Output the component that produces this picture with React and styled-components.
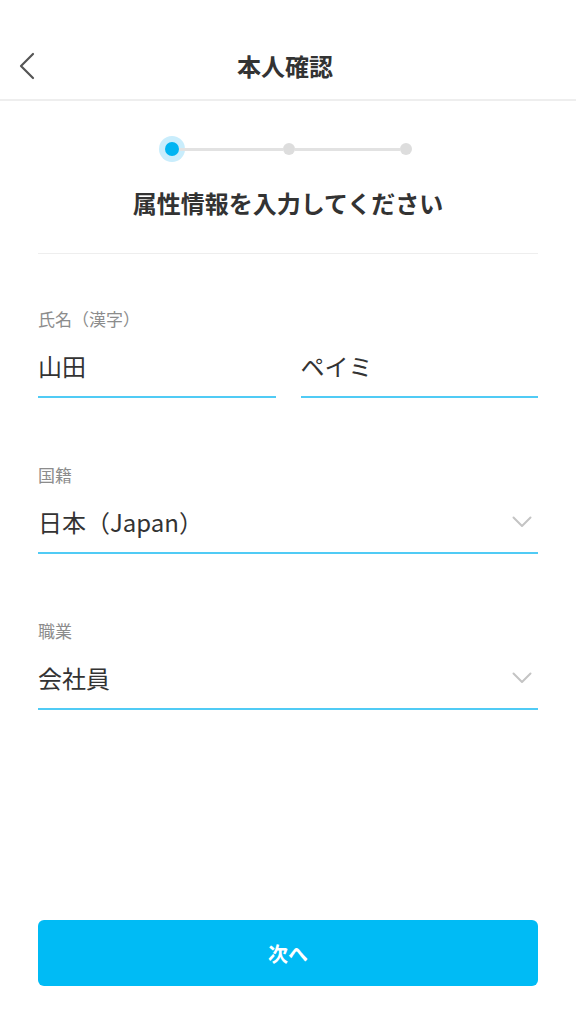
import React from "react";
import styled, { createGlobalStyle } from "styled-components";

const GlobalStyle = createGlobalStyle`
  * {
    box-sizing: border-box;
  }
  body {
    margin: 0;
    background: #fff;
    font-family: "Noto Sans CJK JP", "Noto Sans", sans-serif;
    color: #333;
  }
`;

const Page = styled.div`
  min-height: 1024px;
  display: flex;
  flex-direction: column;
  padding-bottom: 38px;
`;

const Header = styled.header`
  height: 101px;
  padding-top: 33px;
  border-bottom: 2px solid #eeeeee;
`;

const HeaderRow = styled.div`
  height: 66px;
  display: flex;
  align-items: center;
  justify-content: center;
  position: relative;
`;

const BackButton = styled.button`
  position: absolute;
  left: 14px;
  top: 50%;
  transform: translateY(-50%);
  background: none;
  border: none;
  padding: 4px;
  display: flex;
  cursor: pointer;
`;

const HeaderTitle = styled.h1`
  margin: 0 0 0 -6px;
  font-size: 24px;
  font-weight: 700;
  color: #333;
  line-height: 32px;
`;

const Stepper = styled.div`
  margin: 41px auto 0;
  width: 247px;
  height: 14px;
  display: flex;
  align-items: center;
`;

const Dot = styled.span`
  width: ${(props) => (props.active ? "14px" : "12px")};
  height: ${(props) => (props.active ? "14px" : "12px")};
  border-radius: 50%;
  flex-shrink: 0;
  background-color: ${(props) => (props.active ? "#00b4f2" : "#dddddd")};
  box-shadow: ${(props) => (props.active ? "0 0 0 6px #c9edfc" : "none")};
`;

const StepLine = styled.span`
  flex: 1;
  height: 3px;
  background-color: #e2e2e2;
`;

const Title = styled.h2`
  margin: 30px 0 0;
  text-align: center;
  font-size: 24px;
  line-height: 34px;
  font-weight: 700;
  color: #333;
`;

const Divider = styled.hr`
  margin: 33px 38px 0;
  border: none;
  height: 1px;
  background-color: #eeeeee;
`;

const Form = styled.div`
  padding: 0 38px;
  display: flex;
  flex-direction: column;
  gap: 66px;
  margin-top: 54px;
`;

const Field = styled.div`
  display: flex;
  flex-direction: column;
`;

const Label = styled.label`
  font-size: 17px;
  line-height: 22px;
  color: #8c8c8c;
`;

const InputRow = styled.div`
  margin-top: 20px;
  display: flex;
  gap: 25px;
`;

const Input = styled.div`
  flex: 1;
  display: flex;
  align-items: center;
  justify-content: space-between;
  height: 48px;
  padding-bottom: 14px;
  border-bottom: 2px solid #50cbf5;
  font-size: 24px;
  line-height: 32px;
  color: #333;
`;

const Chevron = styled.svg`
  margin-right: 6px;
  flex-shrink: 0;
`;

const Spacer = styled.div`
  flex: 1;
`;

const SubmitButton = styled.button`
  margin: 0 38px;
  height: 66px;
  border: none;
  border-radius: 6px;
  background-color: #00bbf5;
  color: #fff;
  font-family: inherit;
  font-size: 20px;
  font-weight: 700;
  cursor: pointer;
`;

const SelectField = ({ label, value }) => (
  <Field>
    <Label>{label}</Label>
    <InputRow>
      <Input>
        <span>{value}</span>
        <Chevron width="20" height="12" viewBox="0 0 20 12">
          <path
            d="M1.5 1.5 L10 10 L18.5 1.5"
            fill="none"
            stroke="#c4c4c4"
            strokeWidth="2"
            strokeLinecap="round"
            strokeLinejoin="round"
          />
        </Chevron>
      </Input>
    </InputRow>
  </Field>
);

const App = () => {
  return (
    <Page>
      <GlobalStyle />
      <Header>
        <HeaderRow>
          <BackButton aria-label="戻る">
            <svg width="18" height="28" viewBox="0 0 18 28">
              <path
                d="M15 2 L3 14 L15 26"
                fill="none"
                stroke="#555"
                strokeWidth="2.2"
                strokeLinecap="round"
                strokeLinejoin="round"
              />
            </svg>
          </BackButton>
          <HeaderTitle>本人確認</HeaderTitle>
        </HeaderRow>
      </Header>

      <Stepper>
        <Dot active />
        <StepLine />
        <Dot />
        <StepLine />
        <Dot />
      </Stepper>

      <Title>属性情報を入力してください</Title>
      <Divider />

      <Form>
        <Field>
          <Label>氏名（漢字）</Label>
          <InputRow>
            <Input>山田</Input>
            <Input>ペイミ</Input>
          </InputRow>
        </Field>
        <SelectField label="国籍" value="日本（Japan）" />
        <SelectField label="職業" value="会社員" />
      </Form>

      <Spacer />
      <SubmitButton>次へ</SubmitButton>
    </Page>
  );
};

export default App;
